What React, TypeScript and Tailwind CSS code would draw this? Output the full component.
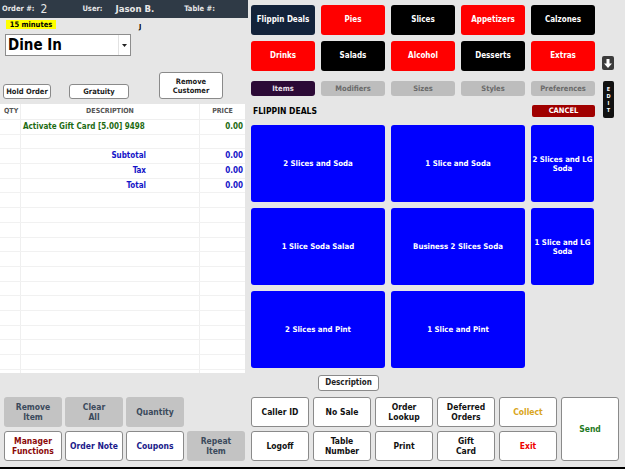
import React from "react";

const font = "font-['DejaVu_Sans_Condensed','DejaVu_Sans',sans-serif]";

interface Cat {
  label: string;
  bg: string;
}

const categories: Cat[] = [
  { label: "Flippin Deals", bg: "bg-[#13233a]" },
  { label: "Pies", bg: "bg-[#ff0000]" },
  { label: "Slices", bg: "bg-black" },
  { label: "Appetizers", bg: "bg-[#ff0000]" },
  { label: "Calzones", bg: "bg-black" },
  { label: "Drinks", bg: "bg-[#ff0000]" },
  { label: "Salads", bg: "bg-black" },
  { label: "Alcohol", bg: "bg-[#ff0000]" },
  { label: "Desserts", bg: "bg-black" },
  { label: "Extras", bg: "bg-[#ff0000]" },
];

const tabs = ["Modifiers", "Sizes", "Styles", "Preferences"];

const deals = [
  "2 Slices and Soda",
  "1 Slice and Soda",
  "2 Slices and LG\nSoda",
  "1 Slice Soda Salad",
  "Business 2 Slices Soda",
  "1 Slice and LG\nSoda",
  "2 Slices and Pint",
  "1 Slice and Pint",
];

// white action buttons at the bottom right
const actions: { label: string; color: string }[] = [
  { label: "Caller\u00a0ID", color: "text-[#111]" },
  { label: "No\u00a0Sale", color: "text-[#111]" },
  { label: "Order Lookup", color: "text-[#111]" },
  { label: "Deferred Orders", color: "text-[#111]" },
  { label: "Collect", color: "text-[#d9a520]" },
  { label: "Logoff", color: "text-[#111]" },
  { label: "Table Number", color: "text-[#111]" },
  { label: "Print", color: "text-[#111]" },
  { label: "Gift Card", color: "text-[#111]" },
  { label: "Exit", color: "text-[#ee0000]" },
];

function TwoLine({ text }: { text: string }) {
  const parts = text.split(" ");
  if (parts.length < 2) return <span>{text}</span>;
  return (
    <span className="block leading-[10px]">
      {parts[0]}
      <br />
      {parts.slice(1).join(" ")}
    </span>
  );
}

function OrderTable() {
  const rows: { desc: string; price: string; kind: "item" | "total" | "blank" }[] = [
    { desc: "Activate Gift Card [5.00] 9498", price: "0.00", kind: "item" },
    { desc: "", price: "", kind: "blank" },
    { desc: "Subtotal", price: "0.00", kind: "total" },
    { desc: "Tax", price: "0.00", kind: "total" },
    { desc: "Total", price: "0.00", kind: "total" },
  ];
  while (rows.length < 17) rows.push({ desc: "", price: "", kind: "blank" });

  return (
    <div className="w-[245px] h-[269px] bg-white flex flex-col">
      <div className="flex h-[16px] items-center text-[7px] font-bold text-[#555] border-b border-[#efefef]">
        <div className="w-[21px] pl-[4px] h-full flex items-center border-r border-[#efefef]">QTY</div>
        <div className="w-[179px] text-center h-full flex items-center justify-center border-r border-[#efefef]">DESCRIPTION</div>
        <div className="flex-1 text-center">PRICE</div>
      </div>
      {rows.map((r, i) => (
        <div key={i} className="flex h-[14.7px] items-center text-[8px] font-bold border-b border-[#f1f1f1]">
          <div className="w-[21px] h-full border-r border-[#efefef]" />
          <div
            className={`w-[179px] h-full flex items-center border-r border-[#efefef] ${
              r.kind === "item" ? "pl-[2px] text-[#1d6b12]" : "justify-end pr-[53px] text-[#1414c8]"
            }`}
          >
            {r.desc}
          </div>
          <div className={`flex-1 text-right pr-[2px] ${r.kind === "item" ? "text-[#1d6b12]" : "text-[#1414c8]"}`}>
            {r.price}
          </div>
        </div>
      ))}
      <div className="flex flex-1">
        <div className="w-[21px] border-r border-[#efefef]" />
        <div className="w-[179px] border-r border-[#efefef]" />
      </div>
    </div>
  );
}

export default function App() {
  return (
    <div className={`w-[625px] h-[469px] bg-[#e6e6e6] flex flex-col ${font}`}>
      <div className="flex flex-1">
        {/* Left: order panel */}
        <div className="w-[248px] flex flex-col">
          <div className="h-[18px] bg-[#2f3a46] flex items-center text-[#e8e8e8] font-bold">
            <span className="ml-[2px] text-[7.5px]">Order #:</span>
            <span className="ml-[6px] text-[12px] font-normal">2</span>
            <span className="ml-[35px] text-[7.5px]">User:</span>
            <span className="ml-[13px] text-[9.5px]">Jason B.</span>
            <span className="ml-[30px] text-[7.5px]">Table #:</span>
          </div>

          <div className="h-[86px] flex flex-col">
            <div className="flex items-start mt-[2px] h-[12px]">
              <span className="ml-[6px] w-[50px] h-[9px] bg-[#ffff00] text-[7.5px] font-bold text-black leading-[9px] text-center">
                15 minutes
              </span>
              <span className="ml-[83px] mt-[4px] text-[7px] font-bold leading-[7px]">J</span>
            </div>
            <div className="ml-[5px] mt-[2px] w-[126px] h-[22px] bg-white border border-[#8d8d8d] flex items-center">
              <span className="pl-[2px] text-[15px] font-bold text-black flex-1 leading-none">Dine In</span>
              <span className="w-[12px] h-[20px] flex items-center justify-center border-l border-[#e2e2e2]">
                <svg width="5" height="3" viewBox="0 0 5 3">
                  <path d="M0 0h5L2.5 3z" fill="#222" />
                </svg>
              </span>
            </div>
            <div className="flex items-end mt-[16px] h-[27px] text-[7.5px] font-bold text-[#222]">
              <button className="ml-[3px] w-[48px] h-[15px] bg-white border border-[#8a8a8a] rounded-[3px]">Hold Order</button>
              <button className="ml-[18px] w-[60px] h-[15px] bg-white border border-[#8a8a8a] rounded-[3px]">Gratuity</button>
              <button className="ml-[30px] w-[64px] h-[27px] bg-white border border-[#8a8a8a] rounded-[3px] leading-[9px]">
                Remove
                <br />
                Customer
              </button>
            </div>
          </div>

          <OrderTable />

          <div className="mt-[24px] ml-[4px] grid grid-cols-[58px_58px_58px_58px] gap-x-[3px] gap-y-[4px] text-[8.5px] font-bold">
            <button className="h-[30px] bg-[#c3c3c3] rounded-[3px] text-[#3b4a5c]"><TwoLine text="Remove Item" /></button>
            <button className="h-[30px] bg-[#c3c3c3] rounded-[3px] text-[#3b4a5c]"><TwoLine text="Clear All" /></button>
            <button className="h-[30px] bg-[#c3c3c3] rounded-[3px] text-[#3b4a5c]">Quantity</button>
            <div />
            <button className="h-[30px] bg-white border border-[#8a8a8a] rounded-[3px] text-[#8b0a0a]"><TwoLine text="Manager Functions" /></button>
            <button className="h-[30px] bg-white border border-[#8a8a8a] rounded-[3px] text-[#1a1a8a]">Order Note</button>
            <button className="h-[30px] bg-white border border-[#8a8a8a] rounded-[3px] text-[#1a1a8a]">Coupons</button>
            <button className="h-[30px] bg-[#c3c3c3] rounded-[3px] text-[#3b4a5c]"><TwoLine text="Repeat Item" /></button>
          </div>
        </div>

        {/* Right: menu panel */}
        <div className="flex-1 flex flex-col pl-[3px] pt-[5px]">
          <div className="flex items-end">
            <div className="grid grid-cols-[64px_64px_64px_64px_64px] gap-[6px]">
              {categories.map((c) => (
                <button
                  key={c.label}
                  className={`h-[30px] ${c.bg} rounded-[3px] text-white text-[8px] font-bold`}
                >
                  {c.label}
                </button>
              ))}
            </div>
            <div className="ml-[7px] mb-[1px] w-[12px] h-[14px] bg-[#3b3b3b] rounded-[2px] flex items-center justify-center">
              <svg width="8" height="9" viewBox="0 0 8 9">
                <path d="M2.5 0h3v4.5H8L4 9 0 4.5h2.5z" fill="#fff" />
              </svg>
            </div>
          </div>

          <div className="flex mt-[10px]">
            <div className="w-[344px] flex flex-col">
              <div className="grid grid-cols-[64px_64px_64px_64px_64px] gap-[6px]">
                <button className="h-[15px] bg-[#2c0a36] rounded-[3px] text-[#e8e0ea] text-[7.5px] font-bold">Items</button>
                {tabs.map((t) => (
                  <button key={t} className="h-[15px] bg-[#bdbdbd] rounded-[3px] text-[#6a6a6a] text-[7.5px] font-bold">
                    {t}
                  </button>
                ))}
              </div>
              <div className="flex items-center justify-between mt-[9px] h-[12px]">
                <span className="ml-[2px] text-[8.5px] font-bold text-black">FLIPPIN DEALS</span>
                <button className="w-[63px] h-[12px] bg-[#a00000] rounded-[2px] text-white text-[7.5px] font-bold leading-[12px]">
                  CANCEL
                </button>
              </div>
            </div>
            <div className="ml-[8px] w-[11px] h-[37px] bg-[#111] rounded-[2px] flex flex-col items-center justify-center text-white text-[5.5px] font-bold leading-[7px]">
              <span>E</span>
              <span>D</span>
              <span>I</span>
              <span>T</span>
            </div>
          </div>

          <div className="mt-[7px] grid grid-cols-[134px_134px_63px] grid-rows-[77px_77px_77px] gap-[6px]">
            {deals.map((d) => (
              <button
                key={d}
                className="bg-[#0000ff] rounded-[3px] text-white text-[7.8px] font-bold leading-[9px] whitespace-pre-line"
              >
                {d}
              </button>
            ))}
          </div>

          <button className="mt-[7px] ml-[67px] w-[61px] h-[16px] bg-white border border-[#8a8a8a] rounded-[3px] text-[8px] font-bold text-[#222]">
            Description
          </button>

          <div className="mt-[6px] grid grid-cols-[58px_58px_58px_58px_58px_58px] grid-rows-[30px_30px] gap-x-[4px] gap-y-[4px] text-[8.5px] font-bold">
            {actions.slice(0, 5).map((a) => (
              <button key={a.label} className={`bg-white border border-[#8a8a8a] rounded-[3px] ${a.color}`}>
                <TwoLine text={a.label} />
              </button>
            ))}
            <button className="row-span-2 bg-white border border-[#8a8a8a] rounded-[3px] text-[#1f7a1f]">Send</button>
            {actions.slice(5).map((a) => (
              <button key={a.label} className={`bg-white border border-[#8a8a8a] rounded-[3px] ${a.color}`}>
                <TwoLine text={a.label} />
              </button>
            ))}
          </div>
        </div>
      </div>
      <div className="h-[2px] bg-black" />
    </div>
  );
}
